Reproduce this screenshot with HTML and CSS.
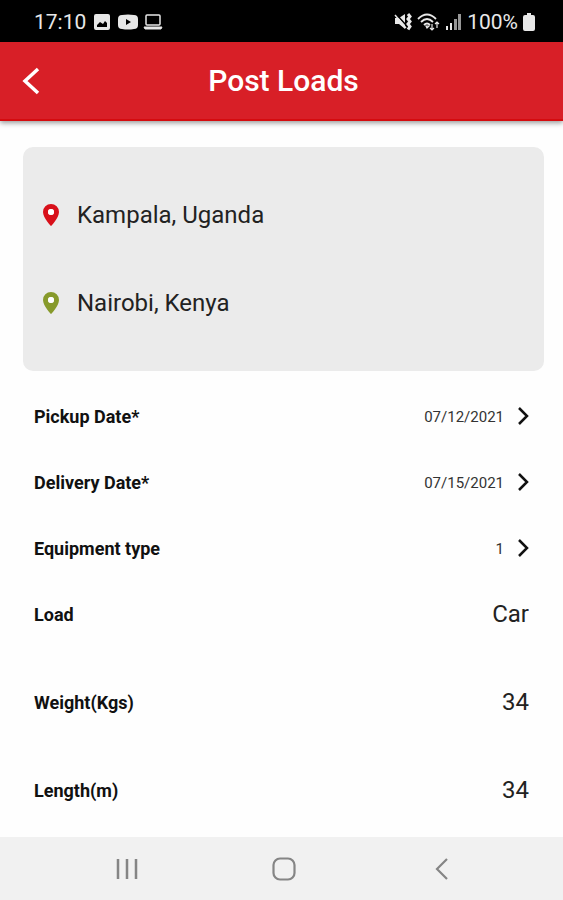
FILE: index.html
```html
<!DOCTYPE html>
<html lang="en">
<head>
<meta charset="utf-8">
<meta name="viewport" content="width=device-width, initial-scale=1">
<title>Post Loads</title>
<link rel="stylesheet" href="styles.css">
</head>
<body>
<div class="status">
  <div class="status-group">
    <span class="clock">17:10</span>
    <svg width="16" height="16" viewBox="0 0 16 16"><path fill="currentColor" fill-rule="evenodd" d="M2 0h12a2 2 0 0 1 2 2v12a2 2 0 0 1-2 2H2a2 2 0 0 1-2-2V2a2 2 0 0 1 2-2ZM3 13h10V9l-2-2-2 3-3-2-3 3Z"/></svg>
    <svg width="20" height="16" viewBox="0 0 20 16"><path fill="currentColor" fill-rule="evenodd" d="M4 1Q10 0 16 1Q20 1 20 5V11Q20 15 16 15Q10 16 4 15Q0 15 0 11V5Q0 1 4 1ZM8 5v6l5-3Z"/></svg>
    <svg class="laptop" width="20" height="16" viewBox="0 0 20 16" fill="none" stroke="currentColor" stroke-width="1.5"><rect x="3" y="1" width="14" height="10" rx="1"/><path d="M1 13h18l-1 2H2Z" fill="currentColor" stroke-width="1"/></svg>
  </div>
  <div class="status-group status-right">
    <svg width="18" height="18" viewBox="0 0 18 18"><path fill="currentColor" d="M1 5h4l6-4v15l-6-5H1Z"/><path d="M1 0l11 12" stroke="#000" stroke-width="1.500"/><path d="M1 2l11 13" stroke="currentColor" stroke-width="1.500"/><path d="M14 1l2 2.500-2 2.500 2 2.500-2 2.500 2 2.500-2 3" fill="none" stroke="currentColor" stroke-width="3"/></svg>
    <svg width="23" height="18" viewBox="0 0 23 18" fill="none" stroke="currentColor" stroke-width="1.800"><path d="M1 6Q10-3 19 6M4 9Q10 3 16 9M7 12q3-3 6 0"/><path d="M9 13h3l-2 2ZM15 11v6m-2-2 2 2 2-2M20 15v-6m-2 2 2-2 2 2" stroke-width="1.200"/></svg>
    <svg width="17" height="18" viewBox="0 0 17 18" fill="currentColor"><path d="M1 13h2v4H1ZM5 10h2v7H5Z"/><path d="M9 6h3v11H9ZM13 1h3v16h-3Z" opacity=".65"/></svg>
    <span class="battery">100%</span>
    <svg width="12" height="18" viewBox="0 0 12 18" fill="currentColor"><path d="M4 0h4v2h2q2 0 2 2v12q0 2-2 2H2q-2 0-2-2V4q0-2 2-2h2Z"/></svg>
  </div>
</div>

<header class="appbar">
  <button class="back" type="button" aria-label="Back"><svg width="18" height="28" viewBox="0 0 18 28"><path d="M16 2 3 14l13 12" fill="none" stroke="currentColor" stroke-width="3.500"/></svg></button>
  <h1>Post Loads</h1>
</header>

<main>
  <section class="route">
    <button class="place" type="button">
      <svg class="pin pin-from" width="18" height="24" viewBox="0 0 18 24"><path fill="currentColor" fill-rule="evenodd" d="M9 1a8 8 0 0 1 8 8c0 6-8 14-8 14S1 15 1 9a8 8 0 0 1 8-8Zm0 5a3 3 0 1 0 0 6 3 3 0 0 0 0-6Z"/><circle cx="9" cy="9" r="3" fill="#fff"/></svg>
      <span>Kampala, Uganda</span>
    </button>
    <button class="place" type="button">
      <svg class="pin pin-to" width="18" height="24" viewBox="0 0 18 24"><path fill="currentColor" fill-rule="evenodd" d="M9 1a8 8 0 0 1 8 8c0 6-8 14-8 14S1 15 1 9a8 8 0 0 1 8-8Zm0 5a3 3 0 1 0 0 6 3 3 0 0 0 0-6Z"/><circle cx="9" cy="9" r="3" fill="#fff"/></svg>
      <span>Nairobi, Kenya</span>
    </button>
  </section>

  <form class="details">
    <div class="pickers">
      <button class="row" type="button"><span class="label">Pickup Date*</span><span class="picked">07/12/2021</span><svg class="chevron" width="12" height="20" viewBox="0 0 12 20"><path d="M2 2l8 8-8 8"/></svg></button>
      <button class="row" type="button"><span class="label">Delivery Date*</span><span class="picked">07/15/2021</span><svg class="chevron" width="12" height="20" viewBox="0 0 12 20"><path d="M2 2l8 8-8 8"/></svg></button>
      <button class="row" type="button"><span class="label">Equipment type</span><span class="picked">1</span><svg class="chevron" width="12" height="20" viewBox="0 0 12 20"><path d="M2 2l8 8-8 8"/></svg></button>
    </div>
    <div class="fields">
      <div class="row"><label class="label" for="load">Load</label><input id="load" type="text" value="Car"></div>
      <div class="row"><label class="label" for="weight">Weight(Kgs)</label><input id="weight" type="text" inputmode="decimal" value="34"></div>
      <div class="row"><label class="label" for="length">Length(m)</label><input id="length" type="text" inputmode="decimal" value="34"></div>
    </div>
  </form>
</main>

<nav class="navbar" aria-label="System">
  <button type="button" aria-label="Recent apps"><svg width="24" height="24" viewBox="0 0 24 24"><path d="M3 2v20M12 2v20M21 2v20" stroke-width="2.500"/></svg></button>
  <button type="button" aria-label="Home"><svg width="24" height="24" viewBox="0 0 24 24"><rect x="1.500" y="1.500" width="21" height="21" rx="6.500" stroke-width="2.200"/></svg></button>
  <button type="button" aria-label="Back"><svg width="24" height="24" viewBox="0 0 24 24"><path d="M17 2 7 12l10 10" stroke-width="2.200"/></svg></button>
</nav>
</body>
</html>
```
FILE: styles.css
```css
* { box-sizing: border-box; }
body {
  margin: 0;
  min-height: 100vh;
  display: flex;
  flex-direction: column;
  background: #fefefe;
  color: #111;
  font-family: Roboto, "Liberation Sans", sans-serif;
}
svg { display: block; flex: none; }
button {
  padding: 0;
  border: 0;
  background: none;
  color: inherit;
  font: inherit;
  text-align: left;
}
.status {
  display: flex;
  justify-content: space-between;
  align-items: center;
  padding: 2px 28px 0 34px;
  height: 42px;
  background: #000;
  color: #e8e8e8;
  font-size: 21px;
}
.status-group { display: flex; align-items: center; gap: 8px; }
.status-right { gap: 5px; }
.laptop { margin-left: -3px; }
.clock, .battery { line-height: 24px; }
.appbar {
  display: grid;
  grid-template-columns: 64px 1fr 60px;
  align-items: center;
  height: 79px;
  background: #d81f27;
  border-bottom: 2px solid #d50b0f;
  color: #fff;
  box-shadow: 0 2px 5px rgba(0, 0, 0, .4);
}
.back { padding-left: 22px; height: 60px; }
h1 {
  margin: 0;
  text-align: center;
  font-size: 30px;
  font-weight: 500;
  line-height: 36px;
}
main { flex: 1; padding: 26px 19px 13px 23px; }
.route {
  display: grid;
  gap: 24px;
  padding: 36px 20px 36px 19px;
  border-radius: 10px;
  background: #ebebeb;
}
.place {
  display: flex;
  align-items: center;
  gap: 17px;
  height: 64px;
  font-size: 24px;
  color: #222;
}
.pin-from { color: #d8101a; }
.pin-to { color: #879a2b; }
.details { padding: 12px 15px 0 11px; }
.fields { display: grid; gap: 22px; }
.row {
  display: flex;
  align-items: center;
  width: 100%;
  height: 66px;
}
.label { flex: 1; font-size: 18px; font-weight: 700; }
.picked { font-size: 15px; line-height: 20px; padding-top: 2px; color: #333; }
.chevron {
  margin-left: 13px;
  fill: none;
  stroke: #111;
  stroke-width: 2.5;
}
input {
  width: 50%;
  min-width: 0;
  padding: 0;
  border: 0;
  background: none;
  color: #222;
  font: inherit;
  font-size: 24px;
  text-align: right;
}
.navbar {
  display: grid;
  grid-template-columns: repeat(3, 1fr);
  height: 63px;
  padding: 0 42px 0 48px;
  background: #f1f1f1;
  color: #858585;
}
.navbar button { display: grid; place-items: center; }
.navbar svg { fill: none; stroke: currentColor; }
```
